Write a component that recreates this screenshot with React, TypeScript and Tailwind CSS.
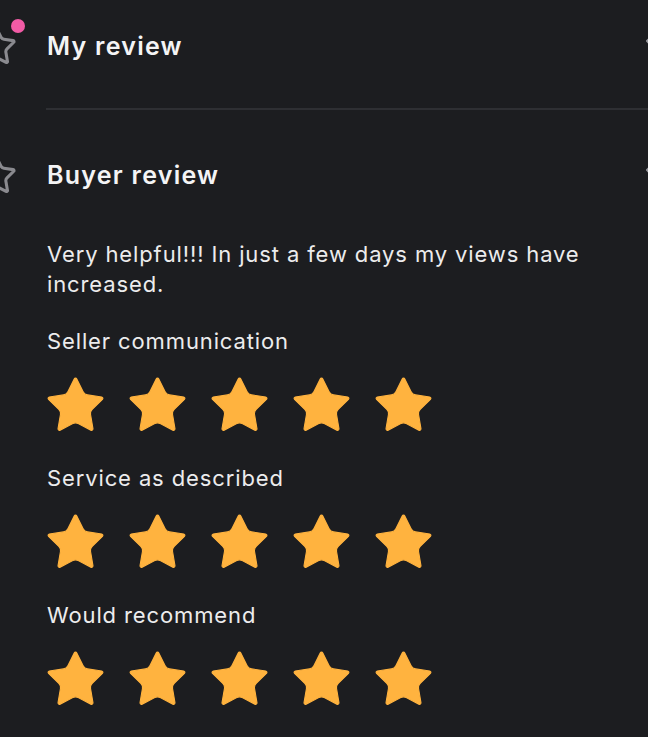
import React from 'react';

const STAR_PATH =
  'M11.525 2.295a.53.53 0 0 1 .95 0l2.31 4.679a2.123 2.123 0 0 0 1.595 1.16l5.166.756a.53.53 0 0 1 .294.904l-3.736 3.638a2.123 2.123 0 0 0-.611 1.878l.882 5.14a.53.53 0 0 1-.771.56l-4.618-2.428a2.122 2.122 0 0 0-1.973 0L6.396 21.01a.53.53 0 0 1-.77-.56l.881-5.139a2.122 2.122 0 0 0-.611-1.879L2.16 9.795a.53.53 0 0 1 .294-.906l5.165-.755a2.122 2.122 0 0 0 1.597-1.16z';

const OutlineStar: React.FC = () => (
  <svg width="36" height="35" viewBox="2 2 20 19.2" fill="none" className="overflow-visible">
    <path d={STAR_PATH} stroke="#8a8a8f" strokeWidth="1.7" strokeLinejoin="round" />
  </svg>
);

const FilledStar: React.FC = () => (
  <svg width="57" height="57" viewBox="1.6 1.6 20.8 20.8" className="shrink-0">
    <path d={STAR_PATH} fill="#ffb33f" stroke="#ffb33f" strokeWidth="0.4" strokeLinejoin="round" />
  </svg>
);

const StarRow: React.FC = () => (
  <div className="flex gap-[25px]">
    {[0, 1, 2, 3, 4].map((i) => (
      <FilledStar key={i} />
    ))}
  </div>
);

interface HeaderRowProps {
  title: string;
  dot?: boolean;
}

const HeaderRow: React.FC<HeaderRowProps> = ({ title, dot }) => (
  <div className="flex items-center">
    <div className="relative w-[69px] shrink-0">
      <OutlineStar />
      {dot && <span className="absolute -top-[9px] left-[33px] h-[14px] w-[14px] rounded-full bg-[#f25ba6]" />}
    </div>
    <h2 className="flex-1 text-[25px] leading-[32px] font-semibold tracking-[0.05em] text-[#f4f4f5]">{title}</h2>
    <svg width="24" height="24" viewBox="0 0 24 24" fill="none" className="mr-[6px] -mt-[9px] shrink-0">
      <path d="M18 9l-6 6-6-6" stroke="#9a9aa0" strokeWidth="2" strokeLinecap="round" strokeLinejoin="round" transform="rotate(90 12 12)" />
    </svg>
  </div>
);

const ratings = ['Seller communication', 'Service as described', 'Would recommend'];

export default function App() {
  return (
    <div className="min-h-screen w-full overflow-hidden bg-[#1c1d20] font-['Inter',sans-serif]">
      <div className="-ml-[22px] w-[690px] pt-[28px]">
        <HeaderRow title="My review" dot />
        <div className="ml-[68px] mt-[45px] h-[2px] bg-[#2e2f33]" />

        <div className="mt-[47px]">
          <HeaderRow title="Buyer review" />
        </div>

        <div className="ml-[69px] w-[560px]">
          <p className="mt-[47px] text-[22px] leading-[30px] tracking-[0.04em] text-[#ececed]">
            Very helpful!!! In just a few days my views have increased.
          </p>

          {ratings.map((label, i) => (
            <div key={label} className={i === 0 ? 'mt-[27px]' : 'mt-[29px]'}>
              <p className="text-[22px] leading-[30px] tracking-[0.04em] text-[#ececed]">{label}</p>
              <div className="mt-[21px]">
                <StarRow />
              </div>
            </div>
          ))}
        </div>
      </div>
    </div>
  );
}
